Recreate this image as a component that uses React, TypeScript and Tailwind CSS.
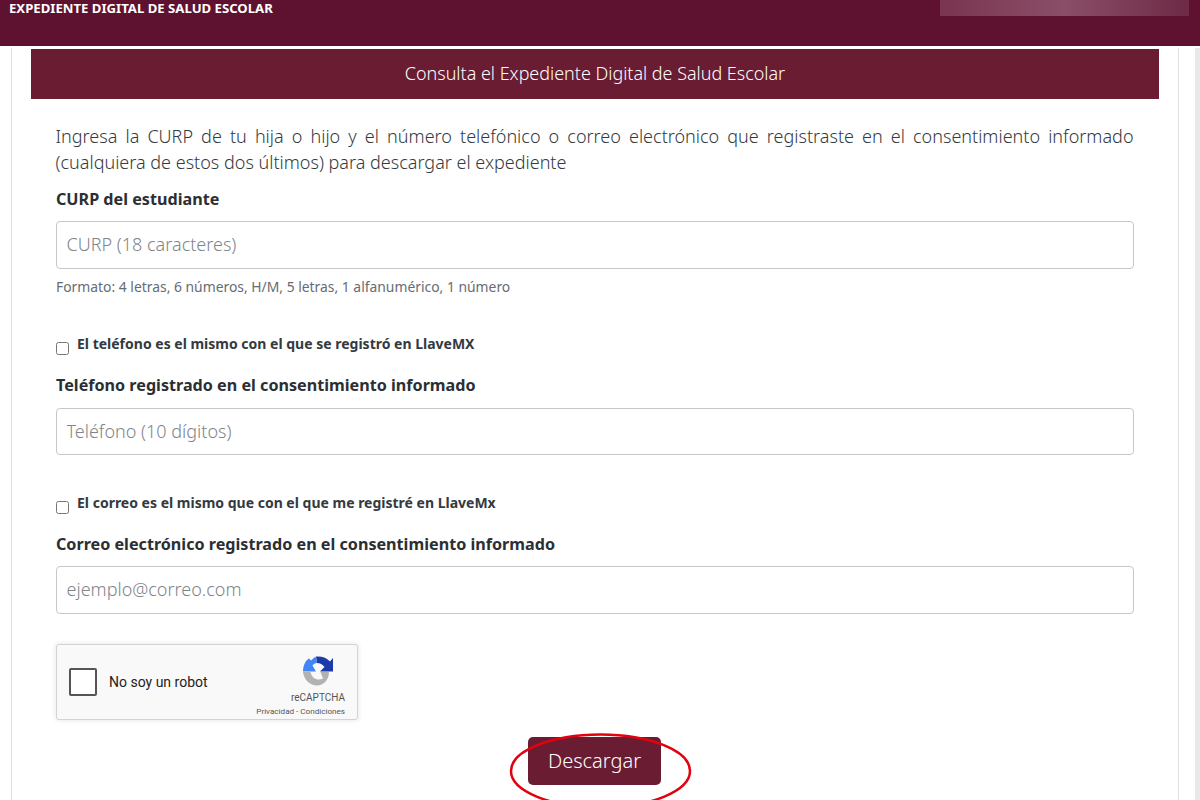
export default function App() {
  const font = { fontFamily: '"Noto Sans", sans-serif' };
  const labelCls = "block text-[16.15px] leading-[24px] font-bold text-[#2b2f33]";
  const inputCls =
    "block w-full rounded-[4px] border border-[#c4c8cc] bg-white px-[9.5px] pb-[2px] text-[18px] font-light text-[#495057] outline-none placeholder:text-[#80858a]";
  const checkCls = "mt-[8px] h-[13px] w-[13px] shrink-0 appearance-none rounded-[2.5px] border border-[#767676] bg-white";
  const checkLabelCls = "text-[14px] leading-[20px] font-bold text-[#343a40]";
  return (
    <div style={font} className="relative h-[800px] w-full overflow-hidden bg-white font-['Noto_Sans',sans-serif]">
      <header className="flex h-[46px] items-start justify-between bg-[#5f1230] pl-[9px] pr-[11px]">
        <div className="text-[13.15px] leading-[17px] font-bold text-white">EXPEDIENTE DIGITAL DE SALUD ESCOLAR</div>
        <div className="h-[16px] w-[249px] bg-gradient-to-r from-[#7a3550] via-[#8a4e68] to-[#6e2a46]" />
      </header>
      <div className="flex h-[754px] border-t-[2px] border-white">
        <div className="w-[1195px] shrink-0 pr-[5px]">
          <div className="mx-[11px] h-full border-x border-[#e0e0e0] bg-white px-[19px] pt-px">
            <div className="flex h-[50px] items-center justify-center bg-[#691c32] pb-[2px] text-[17.95px] font-light text-white">
              Consulta el Expediente Digital de Salud Escolar
            </div>
            <main className="px-[25px] pt-[24px]">
              <p className="ml-[-0.5px] mr-[0.5px] text-justify text-[18px] leading-[26px] font-light text-[#333a40]">
                Ingresa la CURP de tu hija o hijo y el número telefónico o correo electrónico que registraste en el consentimiento informado (cualquiera de estos dos últimos) para descargar el expediente
              </p>
              <label className={`${labelCls} mt-[12px]`}>CURP del estudiante</label>
              <input className={`${inputCls} mt-[10px] h-[48px]`} placeholder="CURP (18 caracteres)" readOnly />
              <div className="mt-[9px] text-[13.88px] leading-[18px] text-[#666c72]">
                Formato: 4 letras, 6 números, H/M, 5 letras, 1 alfanumérico, 1 número
              </div>
              <div className="mt-[38px] flex items-start gap-[8px]">
                <input type="checkbox" className={checkCls} readOnly />
                <span className={checkLabelCls}>El teléfono es el mismo con el que se registró en LlaveMX</span>
              </div>
              <label className={`${labelCls} mt-[18px]`}>Teléfono registrado en el consentimiento informado</label>
              <input className={`${inputCls} mt-[11px] h-[47px]`} placeholder="Teléfono (10 dígitos)" readOnly />
              <div className="mt-[38px] flex items-start gap-[8px]">
                <input type="checkbox" className={checkCls} readOnly />
                <span className={checkLabelCls}>El correo es el mismo que con el que me registré en LlaveMx</span>
              </div>
              <label className={`${labelCls} mt-[18px]`}>Correo electrónico registrado en el consentimiento informado</label>
              <input className={`${inputCls} mt-[10px] h-[48px]`} placeholder="ejemplo@correo.com" readOnly />
              <div className="mt-[30px] flex h-[76px] w-[302px] items-center rounded-[3px] border border-[#d3d3d3] bg-[#f9f9f9] pl-[12px] pr-[12px] font-['Roboto',sans-serif] shadow-[0_0_4px_1px_rgba(0,0,0,0.08)]">
                <div className="h-[28px] w-[28px] rounded-[2px] border-2 border-[#555] bg-white" />
                <span className="ml-[12px] flex-1 text-[14px] text-[#222]">No soy un robot</span>
                <div className="flex flex-col items-end pt-[8px]">
                  <svg viewBox="0 0 30 30" className="mr-[12px] h-[30px] w-[30px]">
                    <path d="M0 15.5 C0 10 2 5 6 2.5 L8 4.5 L12.5 0.5 L14 7 C12 7 10.5 8 9.5 9.5 L13 15.5 Z" fill="#4285f4" />
                    <path d="M13 0.5 C19 0 24 2 27 5.5 L30 2 L30 15.5 L17 15.5 L21.5 11 C19.5 8.5 17 7 14 7 Z" fill="#1c3aa9" />
                    <path d="M0 16 L7.5 16 C8.5 21 12 23.5 16 23.5 C18.5 23.5 20 22.5 20 22.5 L17.5 16 L26 16 C26 24 20.5 29.5 14 29.5 C7 29.5 1 24 0 16 Z" fill="#b2b2b2" />
                  </svg>
                  <span className="mt-[6px] text-[10px] leading-[12px] text-[#555]">reCAPTCHA</span>
                  <span className="mt-[2px] text-[8.1px] leading-[11px] text-[#555]">Privacidad - Condiciones</span>
                </div>
              </div>
              <div className="mt-[17px] flex justify-center pr-[1px]">
                <button className="h-[48px] w-[133px] rounded-[5px] bg-[#691c32] pb-[1px] text-[20px] font-light text-white">
                  Descargar
                </button>
              </div>
            </main>
          </div>
        </div>
        <div className="flex-1 bg-[#e8e8e8]" />
      </div>
      <svg className="pointer-events-none absolute left-[509px] top-[733px] h-[80px] w-[184px]" viewBox="0 0 184 80" fill="none">
        <ellipse cx="91.5" cy="38" rx="89.5" ry="36.5" stroke="#e3000f" strokeWidth="2.5" />
      </svg>
    </div>
  );
}
